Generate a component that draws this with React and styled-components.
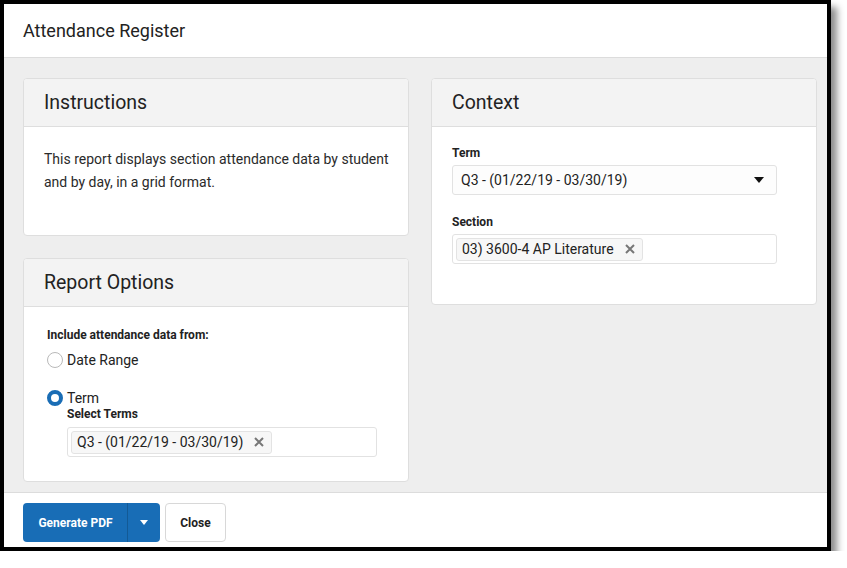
import styled, { createGlobalStyle } from "styled-components";

const GlobalStyle = createGlobalStyle`
  html, body {
    margin: 0;
    padding: 0;
    background: #ffffff;
  }
  * {
    box-sizing: border-box;
  }
`;

const Window = styled.div`
  width: 831px;
  height: 551px;
  border: 4px solid #000;
  display: flex;
  flex-direction: column;
  background: #fff;
  box-shadow: 6px 7px 7px rgba(0, 0, 0, 0.45);
  font-family: Roboto, "Liberation Sans", sans-serif;
  color: #2a2a2a;
`;

const TopBar = styled.div`
  height: 54px;
  flex-shrink: 0;
  border-bottom: 1px solid #dcdcdc;
  display: flex;
  align-items: center;
  padding: 0 19px 0;
  font-size: 18px;
  color: #222;
`;

const Body = styled.div`
  flex: 1;
  background: #eeeeee;
  padding: 20px 11px 0 19px;
  display: grid;
  grid-template-columns: 386px 386px;
  column-gap: 22px;
  align-items: start;
`;

const Column = styled.div`
  display: flex;
  flex-direction: column;
  gap: 22px;
`;

const Card = styled.div`
  background: #fff;
  border: 1px solid #dedede;
  border-radius: 4px;
  overflow: hidden;
`;

const CardHead = styled.div`
  height: 48px;
  background: #f3f3f3;
  border-bottom: 1px solid #dedede;
  display: flex;
  align-items: center;
  padding: 0 20px;
  font-size: 19.5px;
  color: #222;
`;

const CardBody = styled.div`
  padding: ${(p) => p.$pad || "20px"};
  min-height: ${(p) => p.$min || "0"};
`;

const Para = styled.p`
  margin: 0;
  font-size: 14px;
  line-height: 23px;
  color: #2a2a2a;
`;

const Label = styled.div`
  font-size: 12px;
  font-weight: 700;
  color: #222;
  margin-bottom: ${(p) => p.$mb || "5px"};
`;

const Field = styled.div`
  width: ${(p) => p.$w || "325px"};
  height: 30px;
  border: 1px solid #e2e2e2;
  border-radius: 3px;
  background: #fff;
  display: flex;
  align-items: center;
  padding: 0 3px;
  margin-bottom: ${(p) => p.$mb || "0"};
`;

const SelectField = styled(Field)`
  background: #fdfdfd;
  justify-content: space-between;
  padding: 0 12px 0 8px;
  font-size: 14px;
  color: #222;
`;

const Caret = styled.span`
  width: 0;
  height: 0;
  border-left: 5px solid transparent;
  border-right: 5px solid transparent;
  border-top: 6px solid #111;
`;

const Chip = styled.span`
  display: inline-flex;
  align-items: center;
  gap: 11px;
  height: 23px;
  padding: 0 7px 0 5px;
  background: #f7f7f7;
  border: 1px solid #e3e3e3;
  border-radius: 3px;
  font-size: 14px;
  color: #222;
`;

const ChipX = () => (
  <svg width="10" height="10" viewBox="0 0 10 10">
    <path d="M1 1 L9 9 M9 1 L1 9" stroke="#777" strokeWidth="2" strokeLinecap="butt" />
  </svg>
);

const RadioRow = styled.label`
  display: flex;
  align-items: center;
  gap: 4px;
  font-size: 14px;
  color: #222;
  margin-bottom: ${(p) => p.$mb || "0"};
`;

const RadioDot = styled.span`
  width: 16px;
  height: 16px;
  border-radius: 50%;
  border: ${(p) => (p.$on ? "4.5px solid #1a6db5" : "1px solid #b9b9b9")};
  background: #fff;
  flex-shrink: 0;
`;

const Indent = styled.div`
  padding-left: 20px;
  padding-top: 1px;
`;

const Footer = styled.div`
  height: 55px;
  flex-shrink: 0;
  border-top: 1px solid #dcdcdc;
  display: flex;
  align-items: flex-start;
  gap: 5px;
  padding: 10px 19px 0;
`;

const SplitButton = styled.div`
  display: flex;
  height: 39px;
  border-radius: 4px;
  overflow: hidden;
  background: #186db6;
`;

const PrimaryButton = styled.button`
  border: none;
  background: transparent;
  color: #fff;
  font-family: inherit;
  font-size: 12px;
  font-weight: 700;
  white-space: nowrap;
  padding: 0 0 0 1px;
  width: 105px;
  border-right: 1px solid #135a96;
`;

const ToggleButton = styled.button`
  border: none;
  background: transparent;
  width: 32px;
  display: flex;
  align-items: center;
  justify-content: center;
  &::after {
    content: "";
    border-left: 4px solid transparent;
    border-right: 4px solid transparent;
    border-top: 5px solid #fff;
  }
`;

const GhostButton = styled.button`
  height: 39px;
  width: 61px;
  background: #fff;
  border: 1px solid #d8d8d8;
  border-radius: 4px;
  font-family: inherit;
  font-size: 12px;
  font-weight: 700;
  color: #222;
`;

export default function App() {
  return (
    <>
      <GlobalStyle />
      <Window>
        <TopBar>Attendance Register</TopBar>
        <Body>
          <Column>
            <Card>
              <CardHead>Instructions</CardHead>
              <CardBody $pad="21px 12px 21px 20px" $min="108px">
                <Para>
                  This report displays section attendance data by student and
                  by day, in a grid format.
                </Para>
              </CardBody>
            </Card>
            <Card>
              <CardHead>Report Options</CardHead>
              <CardBody $pad="21px 23px 24px">
                <Label $mb="10px">Include attendance data from:</Label>
                <RadioRow $mb="22px">
                  <RadioDot />
                  Date Range
                </RadioRow>
                <RadioRow>
                  <RadioDot $on />
                  Term
                </RadioRow>
                <Indent>
                  <Label $mb="6px">Select Terms</Label>
                  <Field $w="310px">
                    <Chip>
                      Q3 - (01/22/19 - 03/30/19)
                      <ChipX />
                    </Chip>
                  </Field>
                </Indent>
              </CardBody>
            </Card>
          </Column>
          <Column>
            <Card>
              <CardHead>Context</CardHead>
              <CardBody $pad="19px 20px 40px">
                <Label $mb="5px">Term</Label>
                <SelectField $mb="20px">
                  Q3 - (01/22/19 - 03/30/19)
                  <Caret />
                </SelectField>
                <Label $mb="5px">Section</Label>
                <Field>
                  <Chip>
                    03) 3600-4 AP Literature
                    <ChipX />
                  </Chip>
                </Field>
              </CardBody>
            </Card>
          </Column>
        </Body>
        <Footer>
          <SplitButton>
            <PrimaryButton>Generate PDF</PrimaryButton>
            <ToggleButton />
          </SplitButton>
          <GhostButton>Close</GhostButton>
        </Footer>
      </Window>
    </>
  );
}
